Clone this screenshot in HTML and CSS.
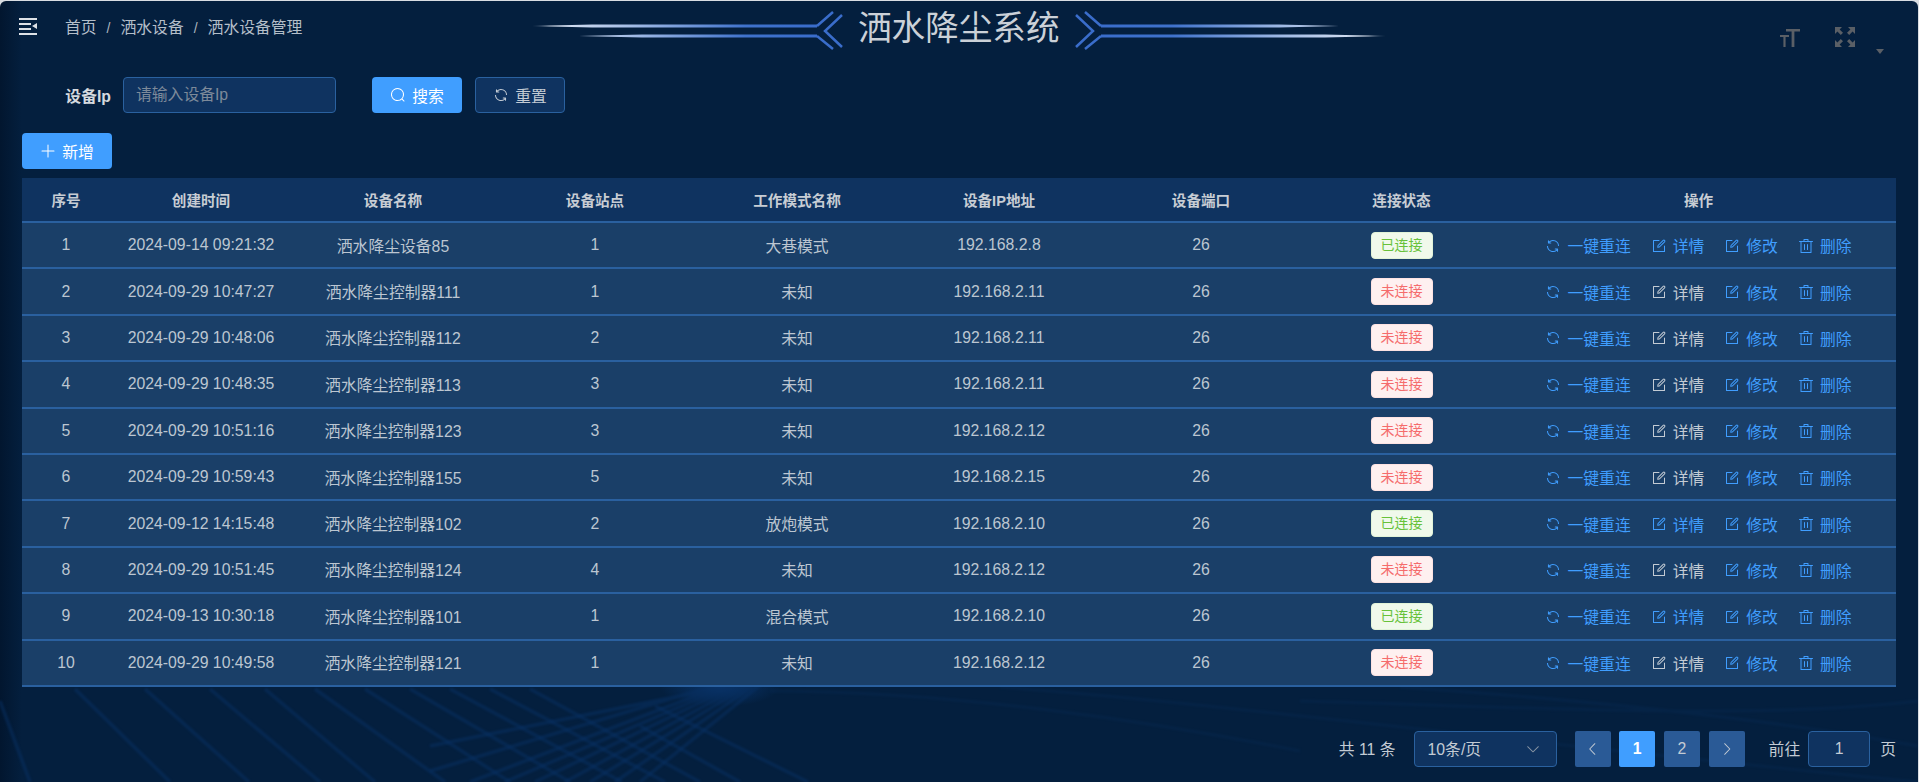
FILE: index.html
```html
<!DOCTYPE html>
<html lang="zh">
<head>
  <meta charset="UTF-8">
  <title>洒水降尘系统</title>
  <link rel="stylesheet" href="styles.css">
</head>
<body>
  <svg class="sprite" aria-hidden="true">
    <symbol id="i-search" viewBox="0 0 1024 1024"><path d="m795.904 750.72 124.992 124.928a32 32 0 0 1-45.248 45.248L750.656 795.904a416 416 0 1 1 45.248-45.248zM480 832a352 352 0 1 0 0-704 352 352 0 0 0 0 704z"/></symbol>
    <symbol id="i-plus" viewBox="0 0 1024 1024"><path d="M480 480V128a32 32 0 0 1 64 0v352h352a32 32 0 0 1 0 64H544v352a32 32 0 1 1-64 0V544H128a32 32 0 0 1 0-64h352z"/></symbol>
    <symbol id="i-refresh" viewBox="0 0 1024 1024"><path d="M771.776 794.88A384 384 0 0 1 128 512h64a320 320 0 0 0 555.712 216.448H654.72a32 32 0 1 1 0-64h149.056a32 32 0 0 1 32 32v148.928a32 32 0 1 1-64 0v-50.56zM276.288 295.616h92.992a32 32 0 0 1 0 64H220.16a32 32 0 0 1-32-32V178.56a32 32 0 0 1 64 0v50.56A384 384 0 0 1 896.128 512h-64a320 320 0 0 0-555.84-216.384z"/></symbol>
    <symbol id="i-edit" viewBox="0 0 1024 1024"><path d="M832 512a32 32 0 1 1 64 0v352a32 32 0 0 1-32 32H160a32 32 0 0 1-32-32V160a32 32 0 0 1 32-32h352a32 32 0 0 1 0 64H192v640h640V512z"/><path d="m469.952 554.24 52.8-7.552L847.104 222.4a32 32 0 1 0-45.248-45.248L477.44 501.44l-7.552 52.8zm422.4-422.4a96 96 0 0 1 0 135.808l-331.84 331.84a32 32 0 0 1-18.112 9.088L436.8 623.68a32 32 0 0 1-36.224-36.224l15.104-105.6a32 32 0 0 1 9.024-18.112l331.904-331.84a96 96 0 0 1 135.744 0z"/></symbol>
    <symbol id="i-delete" viewBox="0 0 1024 1024"><path d="M160 256H96a32 32 0 0 1 0-64h256V95.936a32 32 0 0 1 32-32h256a32 32 0 0 1 32 32V192h256a32 32 0 1 1 0 64h-64v672a32 32 0 0 1-32 32H192a32 32 0 0 1-32-32V256zm448-64v-64H416v64h192zM224 896h576V256H224v640zm192-128a32 32 0 0 1-32-32V416a32 32 0 0 1 64 0v320a32 32 0 0 1-32 32zm192 0a32 32 0 0 1-32-32V416a32 32 0 0 1 64 0v320a32 32 0 0 1-32 32z"/></symbol>
    <symbol id="i-left" viewBox="0 0 1024 1024"><path d="M609.408 149.376 277.76 489.6a32 32 0 0 0 0 44.672l331.648 340.352a29.12 29.12 0 0 0 41.728 0 30.592 30.592 0 0 0 0-42.752L339.264 511.936l311.872-319.872a30.592 30.592 0 0 0 0-42.688 29.12 29.12 0 0 0-41.728 0z"/></symbol>
    <symbol id="i-right" viewBox="0 0 1024 1024"><path d="M340.864 149.312a30.592 30.592 0 0 0 0 42.752L652.736 512 340.864 831.872a30.592 30.592 0 0 0 0 42.752 29.12 29.12 0 0 0 41.728 0L714.24 534.336a32 32 0 0 0 0-44.672L382.592 149.376a29.12 29.12 0 0 0-41.728 0z"/></symbol>
    <symbol id="i-down" viewBox="0 0 1024 1024"><path d="M831.872 340.864 512 652.672 192.128 340.864a30.592 30.592 0 0 0-42.752 0 29.12 29.12 0 0 0 0 41.6L489.664 714.24a32 32 0 0 0 44.672 0l340.288-331.712a29.12 29.12 0 0 0 0-41.728 30.592 30.592 0 0 0-42.752 0z"/></symbol>
    <linearGradient id="line-l" x1="0" x2="1" y1="0" y2="0">
      <stop offset="0" stop-color="#dfe6f2" stop-opacity="0.3"/>
      <stop offset=".06" stop-color="#dfe6f2"/>
      <stop offset=".35" stop-color="#a3bce6"/>
      <stop offset=".75" stop-color="#3f72cc"/>
      <stop offset="1" stop-color="#3a6dcb"/>
    </linearGradient>
    <linearGradient id="line-r" x1="1" x2="0" y1="0" y2="0">
      <stop offset="0" stop-color="#dfe6f2" stop-opacity="0.3"/>
      <stop offset=".06" stop-color="#dfe6f2"/>
      <stop offset=".35" stop-color="#a3bce6"/>
      <stop offset=".75" stop-color="#3f72cc"/>
      <stop offset="1" stop-color="#3a6dcb"/>
    </linearGradient>
    <radialGradient id="glow">
      <stop offset="0" stop-color="#0a3a78" stop-opacity="0.8"/>
      <stop offset="1" stop-color="#0a3a78" stop-opacity="0"/>
    </radialGradient>
  </svg>

  <div class="app">
    <!-- lines behind the lower part of the page -->
    <svg class="backdrop" viewBox="0 0 1918 781" aria-hidden="true">
      <ellipse cx="720" cy="686" rx="60" ry="20" fill="url(#glow)"/>
      <g class="rays">
        <path d="M0 700L30 781M75 688L170 781M145 688L249 781M210 688L320 781M265 688L375 781M315 688L445 781M365 688L510 781M410 688L570 781M450 688L622 781M490 688L665 781M530 688L700 781M655 705L808 781M640 725L740 781"/>
        <path d="M765 680L640 781M760 680L615 781M755 680L590 781M750 680L565 781M745 680L535 781M740 680L505 781M735 680L470 781M730 680L430 770M725 686L430 745"/>
      </g>
      <g class="curves">
        <path d="M770 690C950 690 1150 720 1300 750M1000 686C1200 700 1500 740 1918 781M1400 686C1600 700 1780 720 1918 745M1300 700C1500 705 1750 720 1918 700"/>
      </g>
    </svg>

    <header class="topbar">
      <svg class="hamburger" viewBox="0 0 18 17" aria-hidden="true">
        <path d="M0 0h18v2H0zM0 5h12v2H0zM0 10h12v2H0zM0 15h18v2H0zM18 5v6l-5-3z"/>
      </svg>
      <nav class="breadcrumb">
        <span>首页</span><i>/</i><span>洒水设备</span><i>/</i><span>洒水设备管理</span>
      </nav>
      <div class="title-deco">
        <svg class="deco" viewBox="0 0 311 50" aria-hidden="true">
          <path class="deco-bar" fill="url(#line-l)" d="M0 22L60 20.5H285V23.5H60zM47 32L110 30.5H285V33.5H110z"/>
          <path class="deco-line" d="M285 22L301 8M285 32L301 45M310 11L293 27L310 43"/>
        </svg>
        <h1 class="system-title">洒水降尘系统</h1>
        <svg class="deco" viewBox="0 0 311 50" aria-hidden="true">
          <path class="deco-bar" fill="url(#line-r)" d="M264 22L204 20.5H26V23.5H204zM311 32L250 30.5H26V33.5H250z"/>
          <path class="deco-line" d="M26 22L10 8M26 32L10 45M1 11L18 27L1 43"/>
        </svg>
      </div>
      <div class="tools">
        <svg class="tool" viewBox="0 0 20 20" aria-hidden="true">
          <path d="M6 2h14v2.4h-5.6V20h-2.8V4.4H6zM0 8h9v2H5.6v10H3.4V10H0z"/>
        </svg>
        <svg class="tool" viewBox="0 0 20 20" aria-hidden="true">
          <path d="M0 0h7L4.6 2.4 8 5.8 5.8 8 2.4 4.6 0 7zM20 0v7l-2.4-2.4L14.2 8 12 5.8l3.4-3.4L13 0zM0 20v-7l2.4 2.4L5.8 12 8 14.2l-3.4 3.4L7 20zM20 20h-7l2.4-2.4L12 14.2l2.2-2.2 3.4 3.4L20 13z"/>
        </svg>
        <span class="caret"></span>
      </div>
    </header>

    <main class="content">
      <form class="search-form">
        <label class="field-label" for="deviceIp">设备Ip</label>
        <input class="text-input" id="deviceIp" type="text" placeholder="请输入设备Ip">
        <button class="btn btn-primary search-btn" type="button"><svg class="icon"><use href="#i-search"/></svg>搜索</button>
        <button class="btn btn-plain" type="button"><svg class="icon"><use href="#i-refresh"/></svg>重置</button>
      </form>

      <div class="toolbar">
        <button class="btn btn-primary" type="button"><svg class="icon"><use href="#i-plus"/></svg>新增</button>
      </div>

      <table class="device-table">
        <colgroup>
          <col class="col-no"><col class="col-time"><col class="col-std"><col class="col-std"><col class="col-std"><col class="col-std"><col class="col-std"><col class="col-state"><col>
        </colgroup>
        <thead>
          <tr><th>序号</th><th>创建时间</th><th>设备名称</th><th>设备站点</th><th>工作模式名称</th><th>设备IP地址</th><th>设备端口</th><th>连接状态</th><th>操作</th></tr>
        </thead>
        <tbody>
          <tr><td>1</td><td>2024-09-14 09:21:32</td><td>洒水降尘设备85</td><td>1</td><td>大巷模式</td><td>192.168.2.8</td><td>26</td><td><span class="tag tag-on">已连接</span></td>
            <td><div class="actions online"><a><svg class="icon"><use href="#i-refresh"/></svg>一键重连</a><a class="detail"><svg class="icon"><use href="#i-edit"/></svg>详情</a><a><svg class="icon"><use href="#i-edit"/></svg>修改</a><a><svg class="icon"><use href="#i-delete"/></svg>删除</a></div></td></tr>
          <tr><td>2</td><td>2024-09-29 10:47:27</td><td>洒水降尘控制器111</td><td>1</td><td>未知</td><td>192.168.2.11</td><td>26</td><td><span class="tag tag-off">未连接</span></td>
            <td><div class="actions"><a><svg class="icon"><use href="#i-refresh"/></svg>一键重连</a><a class="detail"><svg class="icon"><use href="#i-edit"/></svg>详情</a><a><svg class="icon"><use href="#i-edit"/></svg>修改</a><a><svg class="icon"><use href="#i-delete"/></svg>删除</a></div></td></tr>
          <tr><td>3</td><td>2024-09-29 10:48:06</td><td>洒水降尘控制器112</td><td>2</td><td>未知</td><td>192.168.2.11</td><td>26</td><td><span class="tag tag-off">未连接</span></td>
            <td><div class="actions"><a><svg class="icon"><use href="#i-refresh"/></svg>一键重连</a><a class="detail"><svg class="icon"><use href="#i-edit"/></svg>详情</a><a><svg class="icon"><use href="#i-edit"/></svg>修改</a><a><svg class="icon"><use href="#i-delete"/></svg>删除</a></div></td></tr>
          <tr><td>4</td><td>2024-09-29 10:48:35</td><td>洒水降尘控制器113</td><td>3</td><td>未知</td><td>192.168.2.11</td><td>26</td><td><span class="tag tag-off">未连接</span></td>
            <td><div class="actions"><a><svg class="icon"><use href="#i-refresh"/></svg>一键重连</a><a class="detail"><svg class="icon"><use href="#i-edit"/></svg>详情</a><a><svg class="icon"><use href="#i-edit"/></svg>修改</a><a><svg class="icon"><use href="#i-delete"/></svg>删除</a></div></td></tr>
          <tr><td>5</td><td>2024-09-29 10:51:16</td><td>洒水降尘控制器123</td><td>3</td><td>未知</td><td>192.168.2.12</td><td>26</td><td><span class="tag tag-off">未连接</span></td>
            <td><div class="actions"><a><svg class="icon"><use href="#i-refresh"/></svg>一键重连</a><a class="detail"><svg class="icon"><use href="#i-edit"/></svg>详情</a><a><svg class="icon"><use href="#i-edit"/></svg>修改</a><a><svg class="icon"><use href="#i-delete"/></svg>删除</a></div></td></tr>
          <tr><td>6</td><td>2024-09-29 10:59:43</td><td>洒水降尘控制器155</td><td>5</td><td>未知</td><td>192.168.2.15</td><td>26</td><td><span class="tag tag-off">未连接</span></td>
            <td><div class="actions"><a><svg class="icon"><use href="#i-refresh"/></svg>一键重连</a><a class="detail"><svg class="icon"><use href="#i-edit"/></svg>详情</a><a><svg class="icon"><use href="#i-edit"/></svg>修改</a><a><svg class="icon"><use href="#i-delete"/></svg>删除</a></div></td></tr>
          <tr><td>7</td><td>2024-09-12 14:15:48</td><td>洒水降尘控制器102</td><td>2</td><td>放炮模式</td><td>192.168.2.10</td><td>26</td><td><span class="tag tag-on">已连接</span></td>
            <td><div class="actions online"><a><svg class="icon"><use href="#i-refresh"/></svg>一键重连</a><a class="detail"><svg class="icon"><use href="#i-edit"/></svg>详情</a><a><svg class="icon"><use href="#i-edit"/></svg>修改</a><a><svg class="icon"><use href="#i-delete"/></svg>删除</a></div></td></tr>
          <tr><td>8</td><td>2024-09-29 10:51:45</td><td>洒水降尘控制器124</td><td>4</td><td>未知</td><td>192.168.2.12</td><td>26</td><td><span class="tag tag-off">未连接</span></td>
            <td><div class="actions"><a><svg class="icon"><use href="#i-refresh"/></svg>一键重连</a><a class="detail"><svg class="icon"><use href="#i-edit"/></svg>详情</a><a><svg class="icon"><use href="#i-edit"/></svg>修改</a><a><svg class="icon"><use href="#i-delete"/></svg>删除</a></div></td></tr>
          <tr><td>9</td><td>2024-09-13 10:30:18</td><td>洒水降尘控制器101</td><td>1</td><td>混合模式</td><td>192.168.2.10</td><td>26</td><td><span class="tag tag-on">已连接</span></td>
            <td><div class="actions online"><a><svg class="icon"><use href="#i-refresh"/></svg>一键重连</a><a class="detail"><svg class="icon"><use href="#i-edit"/></svg>详情</a><a><svg class="icon"><use href="#i-edit"/></svg>修改</a><a><svg class="icon"><use href="#i-delete"/></svg>删除</a></div></td></tr>
          <tr><td>10</td><td>2024-09-29 10:49:58</td><td>洒水降尘控制器121</td><td>1</td><td>未知</td><td>192.168.2.12</td><td>26</td><td><span class="tag tag-off">未连接</span></td>
            <td><div class="actions"><a><svg class="icon"><use href="#i-refresh"/></svg>一键重连</a><a class="detail"><svg class="icon"><use href="#i-edit"/></svg>详情</a><a><svg class="icon"><use href="#i-edit"/></svg>修改</a><a><svg class="icon"><use href="#i-delete"/></svg>删除</a></div></td></tr>
        </tbody>
      </table>

      <div class="pagination">
        <span class="total">共 11 条</span>
        <div class="page-size"><span>10条/页</span><svg class="icon"><use href="#i-down"/></svg></div>
        <div class="pager">
          <button class="page-btn" type="button"><svg class="icon"><use href="#i-left"/></svg></button>
          <button class="page-btn active" type="button">1</button>
          <button class="page-btn" type="button">2</button>
          <button class="page-btn" type="button"><svg class="icon"><use href="#i-right"/></svg></button>
        </div>
        <div class="jump"><span>前往</span><input class="jump-input" type="text" value="1"><span class="jump-unit">页</span></div>
      </div>
    </main>
  </div>
</body>
</html>
```

FILE: styles.css
```css
* {
  box-sizing: border-box;
}
html, body {
  height: 100%;
}
body {
  margin: 0;
  overflow: hidden;
  background: #d9dde2;
  font-family: "Liberation Sans", "Noto Sans CJK SC", sans-serif;
  font-size: 15.8px;
  color: #c3cbd4;
}
.sprite {
  position: absolute;
  width: 0;
  height: 0;
}
.icon {
  width: 16px;
  height: 16px;
  fill: currentColor;
  flex: none;
}
.app {
  position: relative;
  height: 781px;
  margin: 1px 1px 0 0;
  border-radius: 6px 6px 0 0;
  overflow: hidden;
  background: linear-gradient(90deg, #02162f 0, #041f3e 22px);
}
.backdrop {
  position: absolute;
  inset: 0;
  width: 100%;
  height: 100%;
}
.rays path {
  fill: none;
  stroke: #083062;
  stroke-width: 3.5;
  opacity: 0.55;
  filter: blur(0.8px);
}
.curves path {
  fill: none;
  stroke: #07284f;
  stroke-width: 3;
  opacity: 0.5;
  filter: blur(1px);
}

/* Top bar */
.topbar {
  position: relative;
  display: flex;
  align-items: flex-start;
  height: 76px;
  padding: 17px 0 0 19px;
}
.hamburger {
  width: 18px;
  height: 17px;
  fill: #dde1e6;
  margin-right: 28px;
}
.breadcrumb {
  display: flex;
  align-items: center;
  height: 20px;
  line-height: 20px;
  color: #b4bec9;
}
.breadcrumb i {
  font-style: normal;
  font-size: 14px;
  margin: 0 10px;
  color: #aab4bf;
}
.title-deco {
  position: absolute;
  top: 3px;
  left: 532px;
  display: flex;
  align-items: flex-start;
  gap: 15px;
}
.deco {
  width: 311px;
  height: 50px;
  flex: none;
}
.deco-line {
  fill: none;
  stroke: #3a6dcb;
  stroke-width: 2.5;
}
.system-title {
  width: 202px;
  margin: 0;
  font-size: 33.6px;
  font-weight: 400;
  line-height: 50px;
  white-space: nowrap;
  color: #cbd1d8;
}
.tools {
  position: absolute;
  top: 26px;
  left: 1780px;
  display: flex;
  align-items: flex-start;
  gap: 35px;
}
.tool {
  width: 20px;
  height: 20px;
  fill: #5a5f66;
}
.caret {
  width: 0;
  height: 0;
  margin: 22px 0 0 -14px;
  border-style: solid;
  border-width: 5px 4px 0;
  border-color: #5a5f66 transparent transparent;
}

/* Content */
.content {
  position: relative;
  padding: 0 22px;
}
.search-form {
  display: flex;
  align-items: center;
  height: 36px;
}
.field-label {
  width: 101px;
  padding-right: 12px;
  text-align: right;
  font-weight: 700;
  color: #d4d9df;
}
.text-input {
  width: 213px;
  height: 36px;
  padding: 0 12px;
  background: #0f3360;
  border: 1px solid #2a619f;
  border-radius: 4px;
  font: inherit;
  color: #c3cbd4;
}
.text-input::placeholder {
  color: #7d8a9a;
}
.btn {
  display: flex;
  align-items: center;
  justify-content: center;
  gap: 6px;
  width: 90px;
  height: 36px;
  padding: 0;
  border: 1px solid transparent;
  border-radius: 4px;
  font: inherit;
  cursor: pointer;
}
.btn-primary {
  background: #409eff;
  color: #fff;
}
.btn-plain {
  margin-left: 13px;
  background: #0f3360;
  border-color: #2a619f;
  color: #c3cbd4;
}
.search-btn {
  margin-left: 36px;
}
.toolbar {
  margin: 20px 0 9px;
}

/* Table */
.device-table {
  width: 100%;
  table-layout: fixed;
  border-collapse: separate;
  border-spacing: 0;
}
.col-no {
  width: 88px;
}
.col-time {
  width: 182px;
}
.col-std {
  width: 202px;
}
.col-state {
  width: 199px;
}
.device-table th {
  height: 45px;
  padding: 0;
  background: #0f3360;
  border-bottom: 2px solid #2a609f;
  font-size: 14.6px;
  font-weight: 700;
  color: #c7cdd4;
}
.device-table td {
  height: 46.4px;
  padding: 0;
  background: #1a3f68;
  border-bottom: 2px solid #2a609f;
  text-align: center;
  white-space: nowrap;
  color: #bcc6d1;
}
.tag {
  display: inline-block;
  height: 27px;
  padding: 0 9px;
  border: 1px solid;
  border-radius: 4px;
  font-size: 14px;
  line-height: 25px;
}
.tag-on {
  background: #f0f9eb;
  border-color: #e1f3d8;
  color: #67c23a;
}
.tag-off {
  background: #fef0f0;
  border-color: #fde2e2;
  color: #f56c6c;
}
.actions {
  display: flex;
  justify-content: center;
  gap: 20px;
  padding-top: 1px;
}
.actions a {
  display: flex;
  align-items: center;
  gap: 6px;
  color: #409eff;
}
.actions .detail {
  color: #c3cbd4;
}
.actions.online .detail {
  color: #409eff;
}

/* Pagination */
.pagination {
  display: flex;
  justify-content: flex-end;
  align-items: center;
  height: 36px;
  margin-top: 44px;
}
.total {
  margin-right: 18px;
}
.page-size {
  display: flex;
  align-items: center;
  justify-content: space-between;
  width: 143px;
  height: 36px;
  margin-right: 18px;
  padding: 0 15px 0 13px;
  background: #0f3360;
  border: 1px solid #2a619f;
  border-radius: 4px;
}
.page-size .icon {
  color: #8794a3;
}
.pager {
  display: flex;
  gap: 8.7px;
  margin-right: 24px;
}
.page-btn {
  display: flex;
  align-items: center;
  justify-content: center;
  width: 36px;
  height: 36px;
  padding: 0;
  background: #2a5a96;
  border: none;
  border-radius: 2px;
  font: inherit;
  color: #c3cbd4;
}
.page-btn.active {
  background: #409eff;
  color: #fff;
  font-weight: 700;
}
.jump {
  display: flex;
  align-items: center;
}
.jump-input {
  width: 62px;
  height: 36px;
  margin: 0 10px 0 8px;
  background: #0f3360;
  border: 1px solid #2a619f;
  border-radius: 4px;
  font: inherit;
  color: #c3cbd4;
  text-align: center;
}
```
